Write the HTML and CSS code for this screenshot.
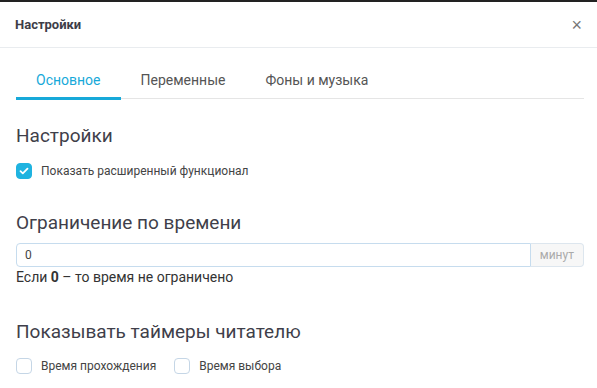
FILE: index.html
```html
<!DOCTYPE html>
<html lang="ru">
<head>
    <meta charset="UTF-8">
    <meta name="viewport" content="width=device-width, initial-scale=1.0">
    <title>Настройки</title>
    <link rel="stylesheet" href="styles.css">
</head>
<body>
    <div class="modal">
        <div class="modal-header">
            <h5 class="modal-title">Настройки</h5>
            <button class="close" type="button">&times;</button>
        </div>
        <div class="modal-body">
            <ul class="tabs">
                <li class="tab active">Основное</li>
                <li class="tab">Переменные</li>
                <li class="tab">Фоны и музыка</li>
            </ul>

            <h4 class="section-title first">Настройки</h4>
            <div class="check-row">
                <label class="check">
                    <span class="box checked">
                        <svg width="10" height="8" viewBox="0 0 10 8"><path d="M1.5 4.2 L3.8 6.3 L8.5 1.6" fill="none" stroke="#fff" stroke-width="1.8" stroke-linecap="round" stroke-linejoin="round"/></svg>
                    </span>
                    Показать расширенный функционал
                </label>
            </div>

            <h4 class="section-title">Ограничение по времени</h4>
            <div class="input-group">
                <input type="text" value="0">
                <span class="addon">минут</span>
            </div>
            <div class="hint">Если <b>0</b> – то время не ограничено</div>

            <h4 class="section-title">Показывать таймеры читателю</h4>
            <div class="check-row">
                <label class="check"><span class="box"></span>Время прохождения</label>
                <label class="check"><span class="box"></span>Время выбора</label>
            </div>
        </div>
    </div>
</body>
</html>
```

FILE: styles.css
```css
body {
    margin: 0;
    font-family: Roboto, Arial, sans-serif;
    background: #fff;
    color: #333;
}
.modal {
    border-top: 2px solid #222;
    background: #fff;
}
.modal-header {
    display: flex;
    align-items: center;
    justify-content: space-between;
    height: 45px;
    padding: 0 15px;
    border-bottom: 1px solid #e9ecef;
}
.modal-title {
    margin: 0;
    font-size: 13px;
    font-weight: 700;
    color: #3d3d48;
}
.close {
    border: none;
    background: none;
    padding: 0;
    font-size: 18px;
    line-height: 1;
    color: #777;
    font-family: Arial, sans-serif;
    cursor: pointer;
}
.modal-body {
    padding: 20px 13px 0 16px;
}
.tabs {
    display: flex;
    list-style: none;
    margin: 0;
    padding: 0;
    border-bottom: 1px solid #e5e5e5;
}
.tab {
    padding: 4px 20px 9px;
    font-size: 14px;
    color: #555;
    border-bottom: 3px solid transparent;
    margin-bottom: -2px;
}
.tab.active {
    color: #17a9d9;
    border-bottom-color: #17a9d9;
}
.section-title {
    margin: 0 0 9px;
    font-size: 19px;
    line-height: 22px;
    font-weight: 400;
    color: #3f3f4a;
}
.section-title.first {
    margin-top: 26px;
    margin-bottom: 16px;
}
.check-row {
    display: flex;
    gap: 18px;
    height: 16px;
    margin-bottom: 33px;
}
.check-row:last-child {
    margin-top: 15px;
}
.check {
    display: inline-flex;
    align-items: center;
    font-size: 12px;
    color: #444;
}
.box {
    display: inline-flex;
    align-items: center;
    justify-content: center;
    width: 14px;
    height: 14px;
    border: 1px solid #c5d6e6;
    border-radius: 4px;
    margin-right: 9px;
    background: #fff;
}
.box.checked {
    background: #1fb3e0;
    border-color: #1fb3e0;
}
.input-group {
    display: flex;
    height: 24px;
}
.input-group input {
    flex: 1;
    border: 1px solid #c6dcee;
    border-radius: 4px 0 0 4px;
    padding: 0 8px;
    font-family: inherit;
    font-size: 12px;
    color: #444;
    outline: none;
}
.addon {
    display: flex;
    align-items: center;
    padding: 0 9px;
    font-size: 12px;
    color: #aaa;
    background: #f7f7f7;
    border: 1px solid #dde6ee;
    border-left: none;
    border-radius: 0 4px 4px 0;
}
.hint {
    margin: 2px 0 36px;
    font-size: 14px;
    line-height: 16px;
    color: #333;
}
```
